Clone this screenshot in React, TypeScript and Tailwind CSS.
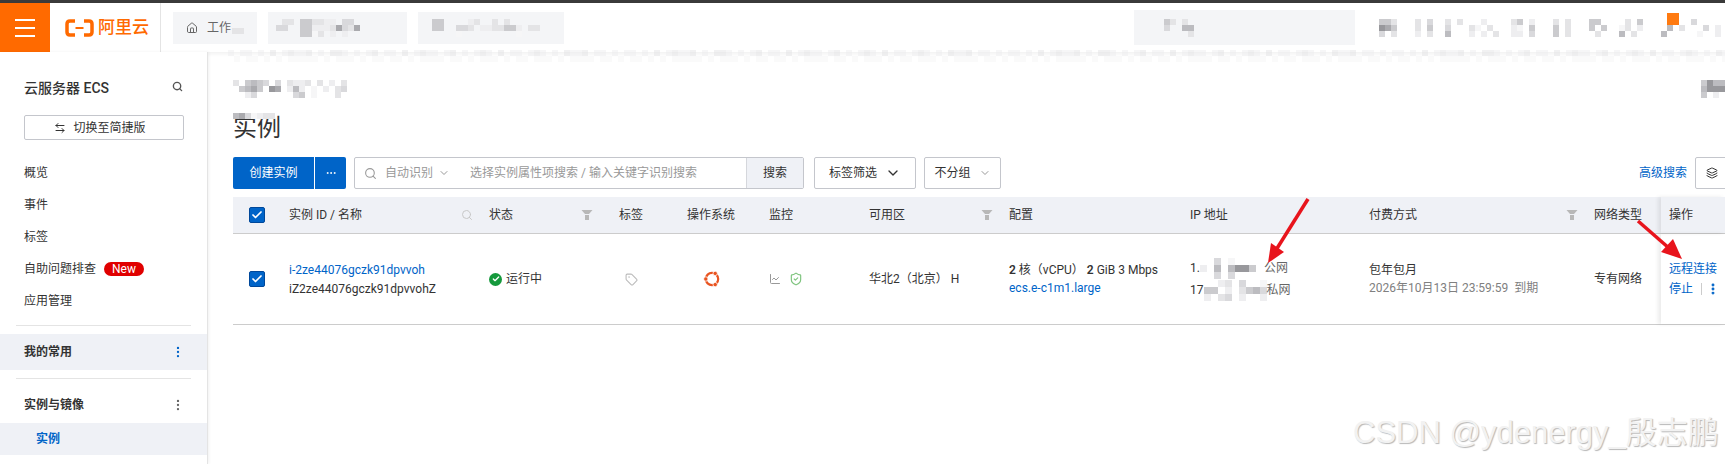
import { Home, Check, ChevronDown, Search, ArrowLeftRight, EllipsisVertical, Ellipsis, Tag, ChartLine, ShieldCheck, Layers } from "lucide-react";

const shades = ["#ffffff", "#f6f6f7", "#eeeef0", "#e4e4e6", "#d9d9dc", "#cbcbce", "#bcbcc0", "#aaaaae", "#98989c", "#858589"];

// pixelated patches of the reference: each digit is one cell, "." leaves it empty
function Mosaic({ rows, cell = 6, bg = "transparent" }: { rows: string[]; cell?: number; bg?: string }) {
  const cols = Math.max(...rows.map((r) => r.length));
  return (
    <svg width={cols * cell} height={rows.length * cell} className="block shrink-0" style={{ background: bg }}>
      {rows.map((row, y) =>
        row.split("").map((c, x) =>
          c === "." ? null : <rect key={`${x}-${y}`} x={x * cell} y={y * cell} width={cell} height={cell} fill={shades[Number(c)]} />
        )
      )}
    </svg>
  );
}

function Box({ checked = true }: { checked?: boolean }) {
  return (
    <span className="flex h-4 w-4 items-center justify-center rounded-[2px] border border-[#00489a] bg-[#0064c8]">
      {checked && <Check className="h-3 w-3 text-white" strokeWidth={3.5} />}
    </span>
  );
}

function Funnel() {
  return (
    <svg width="12" height="12" viewBox="0 0 12 12" className="shrink-0">
      <path d="M0.500 1h11L8 5H4z" fill="#b8b8b8" />
      <rect x="4" y="6" width="4" height="5" fill="#b8b8b8" />
    </svg>
  );
}

function UbuntuLogo() {
  return (
    <svg width="18" height="18" viewBox="0 0 18 18">
      <circle cx="9" cy="9" r="6.2" fill="none" stroke="#e95420" strokeWidth="2.2" />
      <circle cx="2.8" cy="9" r="2.2" fill="#e95420" stroke="#fff" strokeWidth="0.8" />
      <circle cx="12.2" cy="3.4" r="2.2" fill="#e95420" stroke="#fff" strokeWidth="0.8" />
      <circle cx="12.2" cy="14.6" r="2.2" fill="#e95420" stroke="#fff" strokeWidth="0.8" />
    </svg>
  );
}

const navItems = ["概览", "事件", "标签", "自助问题排查", "应用管理"];
const tableCols = "grid grid-cols-[56px_200px_130px_68px_82px_100px_140px_181px_179px_225px_67px_64px]";

function Sidebar() {
  return (
    <aside className="z-10 h-[412px] w-[208px] shrink-0 border-r border-[#e4e4e4] bg-white shadow-[1px_0_3px_rgba(0,0,0,0.06)]">
      <div className="flex items-center justify-between pl-6 pr-[24px] pt-[27px]">
        <span className="text-[14px] font-medium leading-[18px] text-[#333]">云服务器 ECS</span>
        <Search className="h-[11px] w-[11px] -translate-y-[2px] text-[#555]" strokeWidth={3} />
      </div>
      <button className="mx-6 mt-[18px] flex h-[25px] w-[160px] items-center justify-center gap-[7px] rounded-[2px] border border-[#c4c6cc] pr-2 text-[12px] text-[#333]">
        <ArrowLeftRight className="h-3 w-3" />
        切换至简捷版
      </button>
      <nav className="mt-[17px]">
        {navItems.map((item) => (
          <div key={item} className="flex h-8 items-center gap-2 pl-6 text-[12px] text-[#333]">
            {item}
            {item === "自助问题排查" && (
              <span className="flex h-[14px] w-10 items-center justify-center rounded-full bg-[#e00000] text-[12px] text-white">New</span>
            )}
          </div>
        ))}
      </nav>
      <div className="mx-4 mt-2 border-t border-[#e4e4e4]" />
      <div className="mt-2 flex h-9 items-center justify-between bg-[#eff1f6] pl-6 pr-[22px] text-[12px] font-semibold text-[#333]">
        我的常用
        <EllipsisVertical className="h-3.5 w-3.5 text-[#0064c8]" />
      </div>
      <div className="mx-4 mt-2 border-t border-[#e4e4e4]" />
      <div className="mt-2 flex h-9 items-center justify-between pl-6 pr-[22px] text-[12px] font-semibold text-[#333]">
        实例与镜像
        <EllipsisVertical className="h-3.5 w-3.5 text-[#666]" />
      </div>
      <div className="flex h-8 items-center bg-[#eff1f6] pl-9 text-[12px] font-semibold text-[#0064c8]">实例</div>
    </aside>
  );
}

function TopBar() {
  return (
    <header className="z-20 flex h-[49px] items-center bg-white shadow-[0_2px_4px_rgba(0,0,0,0.06)]">
      <div className="flex h-full w-[50px] shrink-0 items-center justify-center bg-[#ff6a00]">
        <div className="flex w-[20px] flex-col gap-[6px]">
          <span className="h-[2px] bg-white" />
          <span className="h-[2px] bg-white" />
          <span className="h-[2px] bg-white" />
        </div>
      </div>
      <div className="flex h-full w-[111px] shrink-0 items-center gap-[4px] border-r border-[#e4e4e4] pl-[15px] text-[#ff6a00]">
        <svg width="29" height="18" viewBox="0 0 29 18" fill="none" stroke="#ff6a00" strokeWidth="3.500">
          <path d="M10 2H5Q2 2 2 5v8q0 3 3 3h5M19 2h5q3 0 3 3v8q0 3-3 3h-5" />
          <path d="M10.500 9h8" strokeWidth="2" />
        </svg>
        <span className="text-[17px] font-medium leading-none">阿里云</span>
      </div>
      <div className="ml-[12px] flex h-8 w-[84px] shrink-0 items-center gap-[9px] bg-[#f4f5f7] pl-[13px] text-[12px] text-[#666]">
        <Home className="h-3 w-3 shrink-0" />
        <span>工作</span>
        <div className="-ml-2">
          <Mosaic rows={["..", "33"]} />
        </div>
      </div>
      <div className="ml-[11px] flex h-8 w-[139px] shrink-0 items-center bg-[#f4f5f7] pl-2">
        <Mosaic rows={[".33.553322.44..", "44..5522237437.", "....5513.2.2..."]} />
      </div>
      <div className="ml-[11px] flex h-8 w-[146px] shrink-0 items-center bg-[#f4f5f7] pl-[14px]">
        <Mosaic rows={["55....23..3.3.....", "55..443.2233552.33", "....1.........1..."]} />
      </div>
      <div className="ml-[570px] flex h-[35px] w-[221px] shrink-0 items-center bg-[#f4f5f7] pl-[18px]">
        <Mosaic rows={["..53.3.", "..4..66", "......3"]} />
      </div>
      <div className="ml-[24px] flex shrink-0 items-start">
        <div className="relative">
          <Mosaic rows={[
            "553...3.4..3.3...2....35.2...3.3...55....3.5....35..4.....",
            "875...3.5..4...31.3...21.5...5.3...5.5..13.2....6.3...4.2.",
            "4.3...2.3..6...2.2.3..22.4...5.3....3...6.3....6.....1..2.",
          ]} />
          <span className="absolute left-[288px] top-[-6px] h-3 w-3 bg-[#ff7a10]" />
        </div>
      </div>
    </header>
  );
}

function Toolbar() {
  return (
    <div className="mt-[14px] flex h-8 items-stretch text-[12px] text-[#333]">
      <button className="flex w-[81px] shrink-0 items-center justify-center rounded-l-[2px] bg-[#0064c8] text-white">创建实例</button>
      <button className="ml-px flex w-[31px] shrink-0 items-center justify-center rounded-r-[2px] bg-[#0064c8] text-white">
        <Ellipsis className="h-3 w-3" />
      </button>
      <div className="ml-2 flex w-[450px] shrink-0 items-stretch rounded-[2px] border border-[#c4c6cc]">
        <div className="flex flex-1 items-center pl-[9px] text-[#999]">
          <Search className="h-[13px] w-[13px]" />
          <span className="ml-[8px]">自动识别</span>
          <ChevronDown className="ml-[5px] h-3 w-3" />
          <span className="ml-[20px]">选择实例属性项搜索 / 输入关键字识别搜索</span>
        </div>
        <div className="flex w-[57px] items-center justify-center border-l border-[#d5d7dc] bg-[#eff1f6]">搜索</div>
      </div>
      <div className="ml-[10px] flex w-[102px] shrink-0 items-center justify-center gap-2 rounded-[2px] border border-[#c4c6cc]">
        标签筛选
        <ChevronDown className="h-4 w-4" />
      </div>
      <div className="ml-2 flex w-[77px] shrink-0 items-center justify-center gap-2 rounded-[2px] border border-[#c4c6cc]">
        不分组
        <ChevronDown className="h-3 w-3 text-[#999]" />
      </div>
      <span className="ml-[638px] shrink-0 self-center whitespace-nowrap text-[#0064c8]">高级搜索</span>
      <div className="ml-2 flex w-[40px] shrink-0 items-center justify-center rounded-l-[2px] border border-[#c4c6cc]">
        <Layers className="h-3 w-3 -translate-x-[3px]" />
      </div>
    </div>
  );
}

function InstanceTable() {
  return (
    <div className="mt-2 w-[1492px] text-[12px] text-[#333]">
      <div className={`${tableCols} h-[37px] items-center border-b border-[#ccc] bg-[#eff1f6]`}>
        <div className="pl-4"><Box /></div>
        <div className="flex items-center justify-between pr-4">
          实例 ID / 名称
          <Search className="h-[12px] w-[12px] text-[#c8c8c8]" />
        </div>
        <div className="flex items-center justify-between pr-[26px]">状态<Funnel /></div>
        <div>标签</div>
        <div>操作系统</div>
        <div>监控</div>
        <div className="flex items-center justify-between pr-[16px]">可用区<Funnel /></div>
        <div>配置</div>
        <div>IP 地址</div>
        <div className="flex items-center justify-between pr-[16px]">付费方式<Funnel /></div>
        <div className="whitespace-nowrap">网络类型</div>
        <div className="flex h-full items-center pl-2 shadow-[-3px_0_4px_rgba(0,0,0,0.08)]">操作</div>
      </div>
      <div className={`${tableCols} h-[91px] items-center border-b border-[#ccc] bg-white`}>
        <div className="pl-4"><Box /></div>
        <div className="flex flex-col gap-[1px] leading-[18px]">
          <span className="text-[#0064c8]">i-2ze44076gczk91dpvvoh</span>
          <span>iZ2ze44076gczk91dpvvohZ</span>
        </div>
        <div className="flex items-center gap-[4px]">
          <span className="flex h-[13px] w-[13px] items-center justify-center rounded-full bg-[#15993c]">
            <Check className="h-2 w-2 text-white" strokeWidth={4} />
          </span>
          运行中
        </div>
        <div className="pl-[6px]"><Tag className="h-[13px] w-[13px] text-[#bbb]" /></div>
        <div className="pl-[16px]"><UbuntuLogo /></div>
        <div className="flex items-center gap-[8px]">
          <ChartLine className="h-3 w-3 text-[#999]" />
          <ShieldCheck className="h-[14px] w-[14px] text-[#7ec47e]" />
        </div>
        <div>华北2（北京） H</div>
        <div className="flex flex-col leading-[18px]">
          <span className="whitespace-nowrap"><b className="font-semibold">2</b> 核（vCPU） <b className="font-semibold">2</b> GiB 3 Mbps</span>
          <span className="text-[#0064c8]">ecs.e-c1m1.large</span>
        </div>
        <div className="flex flex-col gap-[1px] leading-[18px]">
          <div className="flex items-center">
            <span>1.</span>
            <Mosaic rows={["..4.1...", "2.6.6885", "..4.4.."]} cell={7} />
            <span className="ml-[8px] text-[#666]">公网</span>
          </div>
          <div className="flex items-center">
            <span>17</span>
            <Mosaic rows={["..23.4..1", "55.2.3564", "2.34.2..2"]} cell={7} />
            <span className="text-[#666]">私网</span>
          </div>
        </div>
        <div className="flex flex-col leading-[18px]">
          <span>包年包月</span>
          <span className="whitespace-nowrap text-[#808080]">2026年10月13日 23:59:59&nbsp; 到期</span>
        </div>
        <div className="whitespace-nowrap">专有网络</div>
        <div className="flex h-full flex-col justify-center pl-2 text-[#0064c8] shadow-[-3px_0_4px_rgba(0,0,0,0.08)]">
          <span className="whitespace-nowrap leading-[20px]">远程连接</span>
          <div className="flex items-center whitespace-nowrap leading-[20px]">
            停止
            <span className="ml-[8px] h-3 border-l border-[#ccc]" />
            <EllipsisVertical className="ml-[4px] h-3.5 w-3.5" strokeWidth={3} />
          </div>
        </div>
      </div>
    </div>
  );
}

export default function App() {
  const strip = "2.22.2.3.23223.2.332.2.23.22.3.2322.23.2.232.3.22.232.2.3223.22.";
  const faint = strip.replace(/2|3/g, "1");
  return (
    <div className="relative h-[464px] w-[1725px] overflow-hidden bg-white [font-family:Roboto,'Noto_Sans_CJK_SC',sans-serif]">
      <div className="h-[3px] bg-[#3a3a3a]" />
      <TopBar />
      <div className="flex">
        <Sidebar />
        <main className="min-w-0 flex-1 pl-[25px]">
          <div className="flex justify-between pt-[28px]">
            <Mosaic rows={["3.5654.4.3223.3.2.3.", ".5675.87.262.1.2.34", "..24......45.1...3."]} />
            <Mosaic rows={["5866", "6888", "5.2"]} />
          </div>
          <h1 className="relative mt-[15px] h-[30px] text-[24px] font-normal leading-[30px] text-[#333]">
            实例
            <span className="absolute left-0 top-0"><Mosaic rows={["6741233"]} /></span>
          </h1>
          <Toolbar />
          <InstanceTable />
        </main>
      </div>

      {/* blurred band under the top bar */}
      <div className="absolute left-[228px] top-[50px] opacity-50">
        <Mosaic rows={[strip + strip + strip + strip, "." + faint + faint + faint + faint]} />
      </div>

      {/* red annotation arrows */}
      <svg className="pointer-events-none absolute left-0 top-0" width="1725" height="464" viewBox="0 0 1725 464">
        <path d="M1308 199L1276 250" stroke="#e8141c" strokeWidth="3.500" />
        <path d="M1268 263L1271 243L1284 252z" fill="#e8141c" />
        <path d="M1638 221L1670 249" stroke="#e8141c" strokeWidth="3.500" />
        <path d="M1682 259L1661 252L1673 239z" fill="#e8141c" />
      </svg>

      <span className="absolute left-[1353px] top-[413px] whitespace-nowrap text-[31px] leading-[40px] text-[#f2f2f2] [font-family:'Liberation_Sans','Noto_Sans_CJK_SC',sans-serif] [text-shadow:1px_1px_1px_#b8b8b8]">
        CSDN @ydenergy_殷志鹏
      </span>
    </div>
  );
}
